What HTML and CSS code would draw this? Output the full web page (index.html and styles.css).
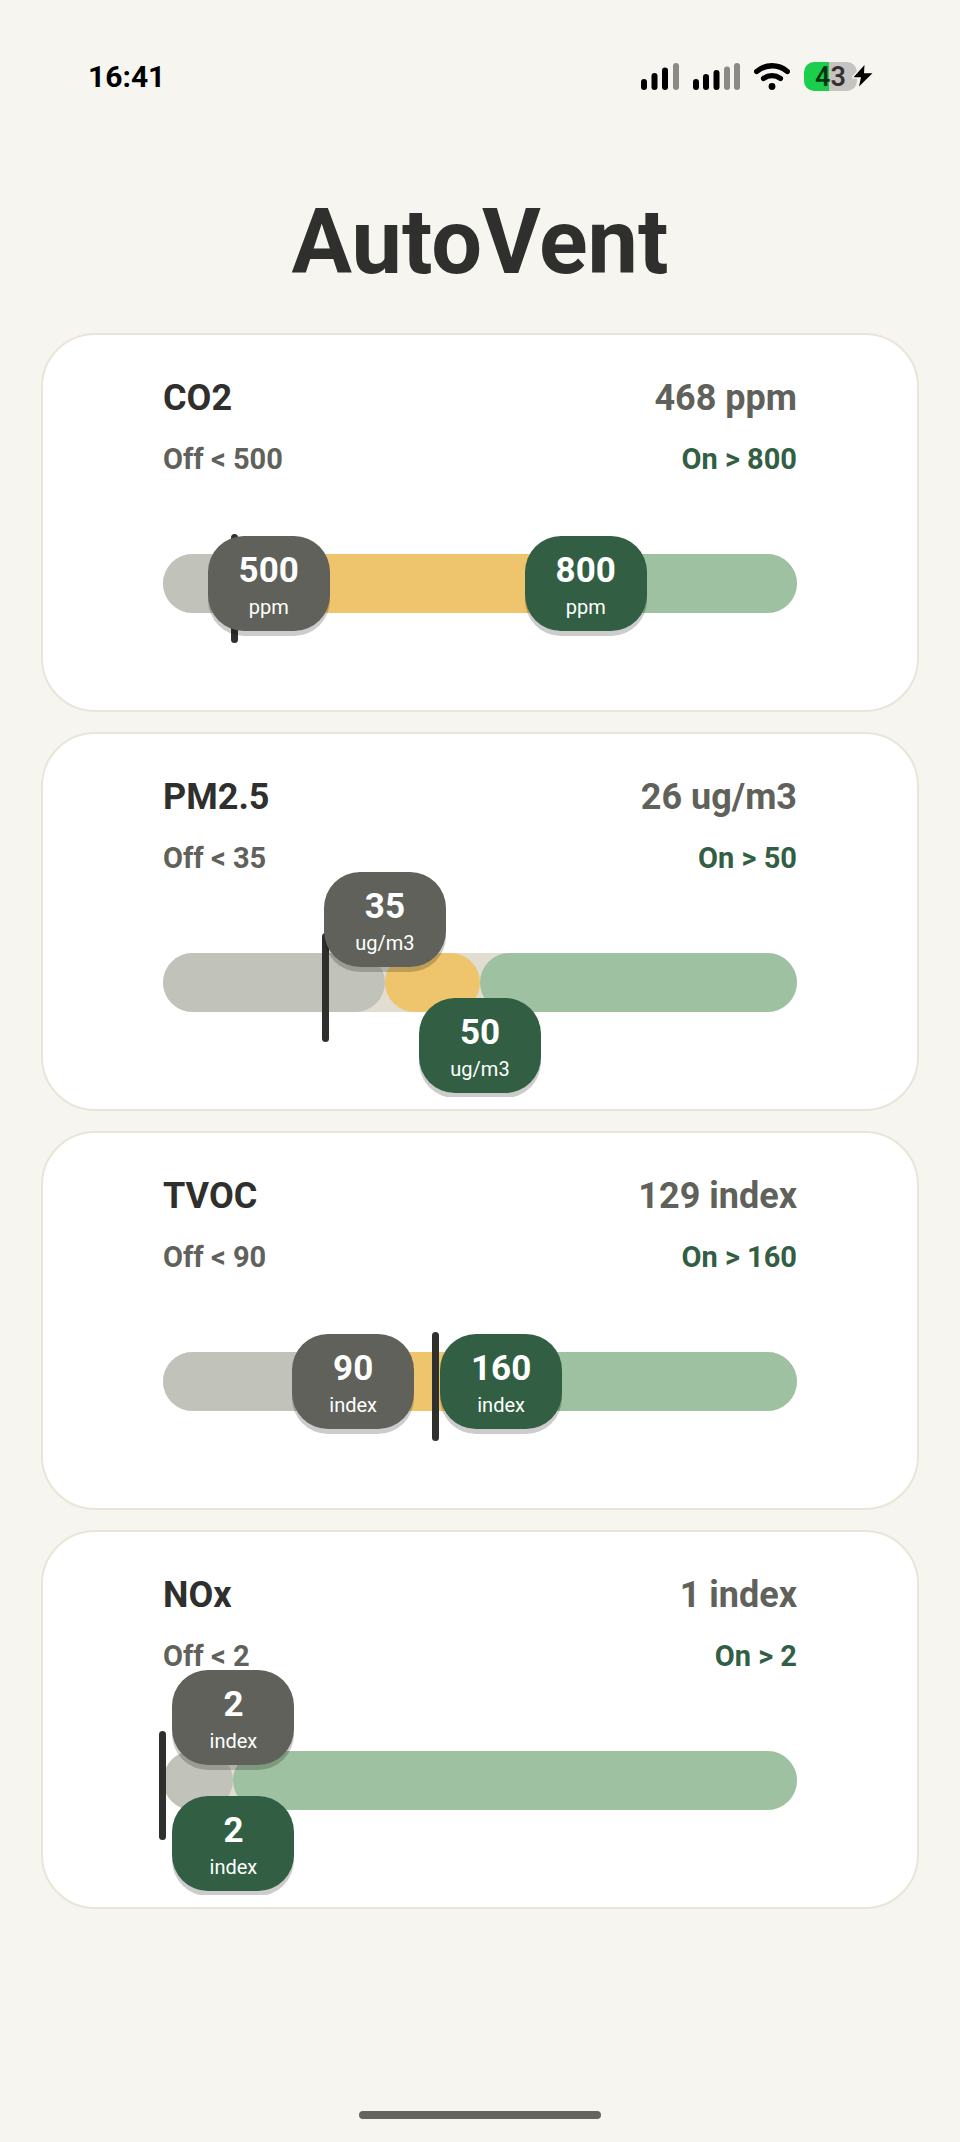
FILE: index.html
```
<!DOCTYPE html>
<html lang="en">
<head>
	<meta charset="UTF-8">
	<meta name="viewport" content="width=device-width, initial-scale=1">
	<title>AutoVent</title>
	<link rel="stylesheet" href="styles.css">
</head>
<body>
	<header class="status">
		<time class="clock">16:41</time>
		<div class="status-icons">
			<svg width="38" height="27" viewBox="0 0 38 27" aria-label="Signal">
				<rect x="0" y="16" width="6" height="11" rx="3"/>
				<rect x="10.5" y="10" width="6" height="17" rx="3"/>
				<rect x="21" y="4.5" width="6" height="22.5" rx="3"/>
				<rect class="dim" x="32" y="0" width="6" height="27" rx="3"/>
			</svg>
			<svg width="47" height="27" viewBox="0 0 47 27" aria-label="Signal">
				<rect x="0" y="16" width="6" height="11" rx="3"/>
				<rect x="10" y="11" width="6" height="16" rx="3"/>
				<rect x="20.5" y="7" width="6" height="20" rx="3"/>
				<rect class="dim" x="31" y="3.5" width="6" height="23.5" rx="3"/>
				<rect class="dim" x="41" y="0" width="6" height="27" rx="3"/>
			</svg>
			<svg width="36" height="27" viewBox="0 0 36 27" aria-label="Wi-Fi">
				<path class="arc" d="M2.7 8.5Q9.5 2.8 18 2.8T33.3 8.500"/>
				<path class="arc" d="M9.6 15.4Q13.5 12.6 18 12.6T26.4 15.400"/>
				<circle cx="18" cy="23.5" r="3.4"/>
			</svg>
			<div class="battery">
				<span class="battery-level">43</span>
				<svg class="bolt" width="24" height="26" viewBox="0 0 24 26" aria-label="Charging">
					<path d="M13.5 2L2.500 14.300H10L8 23.500L21.500 10.300H13Z"/>
				</svg>
			</div>
		</div>
	</header>

	<h1>AutoVent</h1>

	<main class="cards">
		<section class="card">
			<div class="row">
				<h2>CO2</h2>
				<span class="reading">468 ppm</span>
			</div>
			<div class="row limits">
				<label class="off-text" for="co2-off">Off &lt; 500</label>
				<label class="on-text" for="co2-on">On &gt; 800</label>
			</div>
			<div class="slider" style="--now:11.33%; --off:16.67%; --on:66.67%">
				<div class="track">
					<div class="zone zone-off"></div>
					<div class="zone zone-hold"></div>
					<div class="zone zone-on"></div>
				</div>
				<div class="marker"></div>
				<input class="range off" id="co2-off" type="range" min="400" max="1000" value="500">
				<output class="handle off" for="co2-off"><b>500</b>ppm</output>
				<input class="range on" id="co2-on" type="range" min="400" max="1000" value="800">
				<output class="handle on" for="co2-on"><b>800</b>ppm</output>
			</div>
		</section>

		<section class="card">
			<div class="row">
				<h2>PM2.5</h2>
				<span class="reading">26 ug/m3</span>
			</div>
			<div class="row limits">
				<label class="off-text" for="pm-off">Off &lt; 35</label>
				<label class="on-text" for="pm-on">On &gt; 50</label>
			</div>
			<div class="slider split" style="--now:25.7%; --off:35%; --on:50%">
				<div class="track">
					<div class="zone zone-off"></div>
					<div class="zone zone-hold"></div>
					<div class="zone zone-on"></div>
				</div>
				<div class="marker"></div>
				<input class="range off" id="pm-off" type="range" min="0" max="100" value="35">
				<output class="handle off" for="pm-off"><b>35</b>ug/m3</output>
				<input class="range on" id="pm-on" type="range" min="0" max="100" value="50">
				<output class="handle on" for="pm-on"><b>50</b>ug/m3</output>
			</div>
		</section>

		<section class="card">
			<div class="row">
				<h2>TVOC</h2>
				<span class="reading">129 index</span>
			</div>
			<div class="row limits">
				<label class="off-text" for="tvoc-off">Off &lt; 90</label>
				<label class="on-text" for="tvoc-on">On &gt; 160</label>
			</div>
			<div class="slider" style="--now:43%; --off:30%; --on:53.33%">
				<div class="track">
					<div class="zone zone-off"></div>
					<div class="zone zone-hold"></div>
					<div class="zone zone-on"></div>
				</div>
				<div class="marker"></div>
				<input class="range off" id="tvoc-off" type="range" min="0" max="300" value="90">
				<output class="handle off" for="tvoc-off"><b>90</b>index</output>
				<input class="range on" id="tvoc-on" type="range" min="0" max="300" value="160">
				<output class="handle on" for="tvoc-on"><b>160</b>index</output>
			</div>
		</section>

		<section class="card">
			<div class="row">
				<h2>NOx</h2>
				<span class="reading">1 index</span>
			</div>
			<div class="row limits">
				<label class="off-text" for="nox-off">Off &lt; 2</label>
				<label class="on-text" for="nox-on">On &gt; 2</label>
			</div>
			<div class="slider split" style="--now:0%; --off:11.11%; --on:11.11%">
				<div class="track">
					<div class="zone zone-off"></div>
					<div class="zone zone-hold"></div>
					<div class="zone zone-on"></div>
				</div>
				<div class="marker"></div>
				<input class="range off" id="nox-off" type="range" min="1" max="10" value="2">
				<output class="handle off" for="nox-off"><b>2</b>index</output>
				<input class="range on" id="nox-on" type="range" min="1" max="10" value="2">
				<output class="handle on" for="nox-on"><b>2</b>index</output>
			</div>
		</section>
	</main>

	<div class="home-bar"></div>
	<script src="script.js"></script>
</body>
</html>
```
FILE: styles.css
```
* {
	margin: 0;
	padding: 0;
	box-sizing: border-box;
}
body {
	display: flex;
	flex-direction: column;
	min-height: 100vh;
	background: #f7f5f0;
	color: #2f2f2d;
	font-family: Roboto, "Liberation Sans", sans-serif;
}

/* status bar */
.status {
	display: flex;
	justify-content: space-between;
	align-items: center;
	height: 152px;
	padding: 0 88px;
	color: #000;
}
.clock {
	font-size: 30px;
	font-weight: 700;
}
.status-icons {
	display: flex;
	align-items: center;
	gap: 14px;
}
.status-icons svg {
	display: block;
}
.dim {
	fill: #8b8a86;
}
.arc {
	fill: none;
	stroke: #000;
	stroke-width: 5.4;
	stroke-linecap: round;
}
.battery {
	display: flex;
	align-items: center;
}
.battery-level {
	width: 53px;
	height: 29px;
	border-radius: 10px;
	background: linear-gradient(to right, #1bce4b 25px, #c6c4c0 25px);
	color: rgba(0, 0, 0, .75);
	font-size: 27px;
	font-weight: 600;
	line-height: 30px;
	text-align: center;
}
.bolt {
	margin: 0 -3px 0 -6px;
}
.bolt path {
	stroke: #f7f5f0;
	stroke-width: 3;
	stroke-linejoin: round;
	paint-order: stroke;
}

h1 {
	margin: 38px 0 37px;
	font-size: 90px;
	line-height: 106px;
	text-align: center;
}

/* sensor cards */
.cards {
	display: flex;
	flex-direction: column;
	gap: 20px;
	margin: 0 41px 60px;
}
.card {
	padding: 42px 120px 12px;
	border: 2px solid #e9e5da;
	border-radius: 54px;
	background: #fff;
}
.row {
	display: flex;
	justify-content: space-between;
	font-size: 36px;
	font-weight: 700;
	line-height: 42px;
}
h2 {
	font-size: 36px;
}
.limits {
	margin-top: 26px;
	font-size: 29px;
	line-height: 28px;
}
.reading,
.off-text {
	color: #60615b;
}
.on-text {
	color: #325f44;
}

/* threshold slider */
.slider {
	position: relative;
	height: 225px;
	padding-top: 81px;
	overflow-x: visible;
	overflow-y: clip;
}
.track {
	display: flex;
	height: 59px;
	border-radius: 30px;
	background: #e2ddd2;
}
.zone {
	border-radius: 30px;
}
.zone-off {
	width: var(--off);
	background: #c1c3ba;
}
.zone-hold {
	width: calc(var(--on) - var(--off));
	background: #eec56c;
}
.zone-on {
	flex: 1;
	background: #9dc1a1;
}
.marker {
	position: absolute;
	top: 61px;
	left: var(--now);
	width: 7px;
	height: 109px;
	margin-left: -4px;
	border-radius: 4px;
	background: #2f2f2d;
}
.range,
.handle {
	position: absolute;
	top: 63px;
	height: 95px;
	pointer-events: none;
}
.split .off {
	top: 0;
}
.split .on {
	top: 126px;
}
/* wider than the track by one thumb, so the thumb centre sits on the value */
.range {
	left: -61px;
	width: calc(100% + 122px);
	background: none;
	-webkit-appearance: none;
	appearance: none;
}
.range::-webkit-slider-thumb {
	-webkit-appearance: none;
	width: 122px;
	height: 95px;
	border-radius: 36px;
	box-shadow: 0 5px 0 rgba(0, 0, 0, .2);
	cursor: pointer;
	pointer-events: auto;
}
.range.off::-webkit-slider-thumb {
	background: #60615b;
}
.range.on::-webkit-slider-thumb {
	background: #325f44;
}
.handle {
	width: 122px;
	margin-left: -61px;
	padding-top: 14px;
	color: #fff;
	font-size: 20px;
	line-height: 30px;
	text-align: center;
}
.handle.off {
	left: var(--off);
}
.handle.on {
	left: var(--on);
}
.handle b {
	display: block;
	font-size: 35px;
	line-height: 42px;
}

.home-bar {
	width: 242px;
	height: 8px;
	margin: auto auto 23px;
	border-radius: 4px;
	background: #656461;
}
```
FILE: script.js
```
var cards = document.querySelectorAll(".card");

cards.forEach(function (card) {
	var slider = card.querySelector(".slider");
	var off = card.querySelector("input.off");
	var on = card.querySelector("input.on");

	function percent(input) {
		return (input.value - input.min) / (input.max - input.min) * 100;
	}

	function update() {
		slider.style.setProperty("--off", percent(off) + "%");
		slider.style.setProperty("--on", percent(on) + "%");
		// handles that would overlap go above and below the track
		slider.classList.toggle("split", percent(on) - percent(off) < 20);
		card.querySelector(".handle.off b").textContent = off.value;
		card.querySelector(".handle.on b").textContent = on.value;
		card.querySelector(".off-text").textContent = "Off < " + off.value;
		card.querySelector(".on-text").textContent = "On > " + on.value;
	}

	off.oninput = function () {
		if (+off.value > +on.value) {
			off.value = on.value;
		}
		update();
	};
	on.oninput = function () {
		if (+on.value < +off.value) {
			on.value = off.value;
		}
		update();
	};
});
```
